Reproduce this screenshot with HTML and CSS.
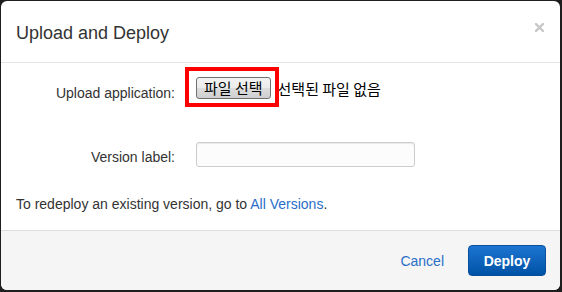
FILE: index.html
```html
<!DOCTYPE html>
<html lang="en">
<head>
    <meta charset="UTF-8">
    <meta name="viewport" content="width=device-width, initial-scale=1.0">
    <title>Upload and Deploy</title>
    <link rel="stylesheet" href="styles.css">
</head>
<body>

<div class="modal">
    <div class="modal-header">
        <h3>Upload and Deploy</h3>
        <button type="button" class="close" aria-label="Close">
            <svg width="9" height="9" viewBox="0 0 9 9">
                <path d="M1 1 L8 8 M8 1 L1 8" stroke="#c8c8c8" stroke-width="2.4" stroke-linecap="square"/>
            </svg>
        </button>
    </div>

    <div class="modal-body">
        <div class="form-row upload-row">
            <label class="upload-label">Upload application:</label>
            <div class="file-control">
                <button type="button" class="file-btn">파일 선택</button>
                <span class="file-name">선택된 파일 없음</span>
                <div class="highlight"></div>
            </div>
        </div>

        <div class="form-row version-row">
            <label class="version-label" for="versionLabel">Version label:</label>
            <div>
                <input type="text" id="versionLabel" class="text-input">
            </div>
        </div>

        <p class="hint">To redeploy an existing version, go to <a href="#">All Versions</a>.</p>
    </div>

    <div class="modal-footer">
        <a href="#" class="cancel">Cancel</a>
        <button type="button" class="deploy">Deploy</button>
    </div>
</div>

</body>
</html>
```

FILE: styles.css
```css
html, body {
    height: 100%;
}

body {
    margin: 0;
    padding: 1px 2px 2px 1px;
    box-sizing: border-box;
    background-color: #1e1e1e;
    font-family: "Liberation Sans", Arial, sans-serif;
    font-size: 14px;
    color: #333;
}

.modal {
    height: 100%;
    background-color: #fff;
    border-radius: 6px;
    display: flex;
    flex-direction: column;
    overflow: hidden;
}

.modal-header {
    display: flex;
    justify-content: space-between;
    align-items: flex-start;
    padding: 22px 16px 19px 15px;
    border-bottom: 1px solid #e5e5e5;
}

.modal-header h3 {
    margin: 0;
    font-size: 18px;
    line-height: 20px;
    font-weight: normal;
    color: #333;
}

.close {
    padding: 0;
    border: none;
    background: none;
    width: 9px;
    height: 9px;
    display: block;
    cursor: pointer;
}

.close svg {
    display: block;
}

.modal-body {
    flex: 1;
    padding: 14px 15px 0;
}

.form-row {
    display: grid;
    grid-template-columns: 160px 1fr;
    column-gap: 20px;
    align-items: start;
}

.form-row label {
    text-align: right;
    line-height: 20px;
    color: #333;
}

.upload-row {
    grid-template-rows: 22px;
}

.upload-label {
    margin-top: 6px;
    padding-right: 1px;
}

.version-row {
    grid-template-rows: 25px;
    margin-top: 43px;
}

.version-label {
    margin-top: 5px;
    padding-right: 1px;
}

.file-control {
    position: relative;
    display: flex;
    align-items: center;
    height: 22px;
}

.file-btn {
    height: 22px;
    padding: 0 7px;
    border: 1px solid #707070;
    border-radius: 3px;
    background: linear-gradient(#f3f3f3, #ebebeb 50%, #dddddd 50%, #cfcfcf);
    font-family: "Noto Sans CJK KR", sans-serif;
    font-size: 15px;
    line-height: 20px;
    color: #000;
}

.file-name {
    margin-left: 7px;
    font-family: "Noto Sans CJK KR", sans-serif;
    font-size: 15px;
    color: #000;
}

.highlight {
    position: absolute;
    left: -11px;
    top: -10px;
    width: 94px;
    height: 40px;
    box-sizing: border-box;
    border: 4px solid #f00;
}

.text-input {
    display: block;
    width: 219px;
    height: 25px;
    box-sizing: border-box;
    border: 1px solid #ccc;
    border-radius: 3px;
    background-color: #fcfcfc;
    box-shadow: inset 0 1px 1px rgba(0, 0, 0, 0.075);
}

.hint {
    margin: 27px 0 0;
    line-height: 20px;
}

a {
    color: #2a6ec8;
    text-decoration: none;
}

.modal-footer {
    display: flex;
    justify-content: flex-end;
    align-items: center;
    gap: 24px;
    height: 59px;
    padding-right: 14px;
    border-top: 1px solid #ddd;
    background-color: #f5f5f5;
}

.deploy {
    width: 78px;
    height: 31px;
    border: 1px solid #0a4f9c;
    border-radius: 4px;
    background: linear-gradient(#1d75d1, #0052a5);
    color: #fff;
    font-family: "Liberation Sans", Arial, sans-serif;
    font-size: 14px;
    font-weight: bold;
    cursor: pointer;
}
```
